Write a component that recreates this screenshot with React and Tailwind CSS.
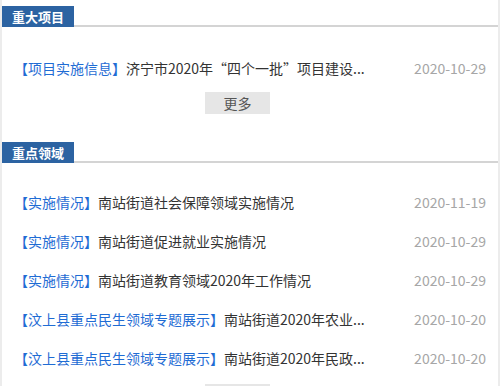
const font = { fontFamily: '"Noto Sans CJK SC", "Noto Sans", sans-serif' };

const major = [
  { tag: '项目实施信息', title: '济宁市2020年“四个一批”项目建设...', date: '2020-10-29' },
];

const key = [
  { tag: '实施情况', title: '南站街道社会保障领域实施情况', date: '2020-11-19' },
  { tag: '实施情况', title: '南站街道促进就业实施情况', date: '2020-10-29' },
  { tag: '实施情况', title: '南站街道教育领域2020年工作情况', date: '2020-10-29' },
  { tag: '汶上县重点民生领域专题展示', title: '南站街道2020年农业...', date: '2020-10-20' },
  { tag: '汶上县重点民生领域专题展示', title: '南站街道2020年民政...', date: '2020-10-20' },
];

function Header({ label }) {
  return (
    <div className="flex border-b-2 border-[#d4d4d4]">
      <div className="relative -mb-[2px] flex h-[21px] w-[72px] items-center justify-center bg-[#2c63a2] text-[13px] font-bold text-white">
        {label}
      </div>
    </div>
  );
}

function Row({ item }) {
  return (
    <div className="flex h-[39px] items-center justify-between pl-[12px] pr-[12px] text-[14px] leading-none">
      <div className="whitespace-nowrap text-[#333]">
        <span className="text-[#1f6cd4]">【{item.tag}】</span>
        {item.title}
      </div>
      <div className="text-[#a6a6a6]">{item.date}</div>
    </div>
  );
}

function More({ className }) {
  return (
    <div className={'pl-[203px] ' + className}>
      <div className="flex h-[22px] w-[65px] items-center justify-center bg-[#e6e6e6] text-[14px] leading-none text-[#555]">
        更多
      </div>
    </div>
  );
}

export default function App() {
  return (
    <div style={font} className="h-[386px] w-[500px] overflow-hidden bg-white">
      <div className="h-full border-l-2 border-r-2 border-[#ececec] pt-[6px]">
        <Header label="重大项目" />
        <div className="pt-[21px]">
          {major.map((m, i) => (
            <Row key={i} item={m} />
          ))}
        </div>
        <More className="mt-[5px]" />

        <div className="mt-[28px]">
          <Header label="重点领域" />
        </div>
        <div className="pt-[19px]">
          {key.map((m, i) => (
            <Row key={i} item={m} />
          ))}
        </div>
        <More className="mt-[7px]" />
      </div>
    </div>
  );
}
